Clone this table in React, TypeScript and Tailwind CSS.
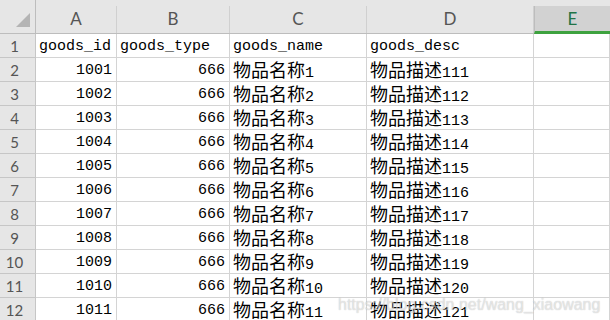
const cols = ["A", "B", "C", "D", "E"];

const rows = Array.from({ length: 11 }, (_, i) => ({
  id: String(1001 + i),
  type: "666",
  name: String(i + 1),
  desc: String(111 + i),
}));

function Cjk({ children }: { children: React.ReactNode }) {
  return (
    <span className="text-[18px] [font-family:'Noto_Sans_CJK_SC',sans-serif]">
      {children}
    </span>
  );
}

const cell =
  "h-6 border-r border-b border-[#d4d4d4] flex items-center pt-[3px] leading-5 whitespace-nowrap";
const rowHead =
  "h-6 border-r border-b border-[#c6c6c6] bg-[#e6e6e6] flex items-center justify-center pr-[6px] pt-px text-[#555] text-[15px] [font-family:Lato,sans-serif]";

export default function App() {
  return (
    <div className="relative w-[610px] h-[320px] overflow-hidden bg-white text-black text-[15px] [font-family:'Liberation_Mono',monospace]">
      <div className="grid grid-cols-[36px_81px_113px_137px_167px_1fr]">
        {/* header row */}
        <div className="h-[34px] bg-[#e6e6e6] border-r border-b border-[#bdbdbd] flex items-end justify-end pb-[6px] pr-[5px]">
          <svg width="14" height="14" viewBox="0 0 14 14">
            <polygon points="0,14 14,0 14,14" fill="#b4b4b4" />
          </svg>
        </div>
        {cols.map((c) => (
          <div key={c} className="h-[34px] bg-[#e6e6e6] border-b border-[#bdbdbd] flex flex-col">
            <div className="h-[6px]" />
            <div
              className={
                c === "E"
                  ? "flex-1 bg-[#d2d2d2] border-l border-[#bdbdbd] border-b-[3px] border-b-[#3ea23f] -mb-px flex items-center justify-center text-[#217346] text-[17px] [font-family:Lato,sans-serif]"
                  : "flex-1 border-r border-[#d0d0d0] flex items-center justify-center pb-[2px] text-[#555] text-[17px] [font-family:Lato,sans-serif]"
              }
            >
              {c}
            </div>
          </div>
        ))}

        {/* row 1 */}
        <div className={rowHead}>1</div>
        <div className={`${cell} pl-[3px]`}>goods_id</div>
        <div className={`${cell} pl-[3px]`}>goods_type</div>
        <div className={`${cell} pl-[3px]`}>goods_name</div>
        <div className={`${cell} pl-[3px]`}>goods_desc</div>
        <div className={cell} />

        {rows.map((r, i) => (
          <div key={r.id} className="contents">
            <div className={rowHead}>{i + 2}</div>
            <div className={`${cell} justify-end pr-[4px]`}>{r.id}</div>
            <div className={`${cell} justify-end pr-[4px]`}>{r.type}</div>
            <div className={`${cell} pl-[3px]`}>
              <span>
                <Cjk>物品名称</Cjk>
                {r.name}
              </span>
            </div>
            <div className={`${cell} pl-[3px]`}>
              <span>
                <Cjk>物品描述</Cjk>
                {r.desc}
              </span>
            </div>
            <div className={cell} />
          </div>
        ))}
      </div>

      {/* csdn watermark */}
      <div className="absolute left-[338px] top-[293px] text-[16px] [font-family:'Liberation_Sans',sans-serif] text-[rgba(255,255,255,0.55)] [text-shadow:0_0_1px_rgba(0,0,0,0.28)]">
        https://blog.csdn.net/wang_xiaowang
      </div>
    </div>
  );
}
